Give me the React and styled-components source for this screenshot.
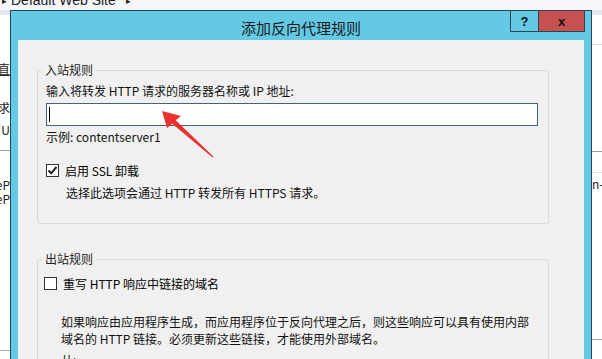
import React from "react";
import styled, { createGlobalStyle } from "styled-components";

const GlobalStyle = createGlobalStyle`
  html, body {
    margin: 0;
    padding: 0;
    width: 602px;
    height: 359px;
    overflow: hidden;
    background: #ffffff;
    font-family: "Noto Sans CJK SC", "Noto Sans", sans-serif;
    color: #000;
  }
`;

const Screen = styled.div`
  position: relative;
  width: 602px;
  height: 359px;
  overflow: hidden;
`;

// window sitting behind the dialog
const BackWindow = styled.div`
  display: flex;
  flex-direction: column;
  height: 100%;
`;

const BackHeader = styled.div`
  height: 10px;
  background: #f4f6f9;
  border-bottom: 5px solid #e1e7ee;
  display: flex;
  align-items: flex-end;
  gap: 4px;
  padding-left: 2px;
  overflow: hidden;
  font-family: "Liberation Sans", sans-serif;
  font-size: 14px;
  line-height: 14px;
  color: #222;
`;

const Caret = styled.span`
  font-size: 9px;
  line-height: 9px;
  margin-bottom: 4px;
  margin-left: ${p => p.gap || 0}px;
`;

const BackText = styled.span`
  margin-bottom: 3px;
`;

const BackBody = styled.div`
  flex: 1;
  display: flex;
  justify-content: space-between;
`;

const BackColumn = styled.div`
  width: 10px;
  overflow: hidden;
  display: flex;
  flex-direction: column;
  padding-top: ${p => p.top}px;
`;

const BackRow = styled.div`
  flex-shrink: 0;
  display: flex;
  align-items: flex-start;
  justify-content: ${p => (p.alignRight ? "flex-end" : "flex-start")};
  white-space: nowrap;
  font-size: 12px;
  line-height: ${p => p.lh || 16}px;
  height: ${p => p.h || 14}px;
  color: #222;
  border-bottom: ${p => (p.line ? `1px solid ${p.line}` : "none")};
  margin-bottom: ${p => p.mb || 0}px;
`;

// dialog
const Dialog = styled.div`
  position: absolute;
  left: 10px;
  top: 10px;
  width: 582px;
  height: 420px;
  box-sizing: border-box;
  border: 1px solid #2a4654;
  background: #63c9e5;
  padding: 0 7px;
  display: flex;
  flex-direction: column;
`;

const TitleBar = styled.div`
  height: 29px;
  box-sizing: border-box;
  padding-top: 3px;
  display: flex;
  align-items: center;
  justify-content: center;
  font-size: 15px;
  color: #1b1b1b;
`;

const Controls = styled.div`
  position: absolute;
  top: -1px;
  right: 6px;
  display: flex;
  height: 22px;
`;

const ControlButton = styled.div`
  width: ${p => p.w}px;
  box-sizing: border-box;
  border: 1px solid #2a4654;
  border-left-width: ${p => (p.first ? 1 : 0)}px;
  background: ${p => p.bg};
  display: flex;
  align-items: center;
  justify-content: center;
  font-family: "Liberation Sans", sans-serif;
  font-weight: bold;
  font-size: 13px;
  color: #111;
`;

const Content = styled.div`
  flex: 1;
  background: #f0f0f0;
  padding-top: 22px;
  display: flex;
  flex-direction: column;
`;

const GroupBox = styled.fieldset`
  margin: ${p => p.mt || 0}px 35px 0 19px;
  padding: 5px 10px ${p => p.pb || 0}px 8px;
  border: 1px solid #d9d9d9;
  border-radius: 3px;
  min-width: 0;
  display: flex;
  flex-direction: column;
`;

const Legend = styled.legend`
  padding: 0 3px;
  margin-left: -4px;
  font-size: 12px;
  line-height: 16px;
  color: #222;
`;

const Text = styled.div`
  font-size: 12px;
  line-height: ${p => p.lh || 16}px;
  margin-top: ${p => p.mt || 0}px;
  padding-left: ${p => p.indent || 0}px;
  white-space: nowrap;
  color: #111;
`;

const TextInput = styled.div`
  margin-top: 4px;
  height: 23px;
  box-sizing: border-box;
  border: 1px solid #3d6480;
  background: #fff;
  display: flex;
  align-items: center;
  padding-left: 2px;
`;

const Cursor = styled.span`
  width: 1px;
  height: 15px;
  background: #000;
`;

const CheckRow = styled.div`
  display: flex;
  align-items: center;
  gap: 6px;
  height: 16px;
  margin-top: ${p => p.mt || 0}px;
  margin-left: ${p => p.ml || 0}px;
  font-size: 12px;
`;

const Box = styled.div`
  width: 13px;
  height: 13px;
  box-sizing: border-box;
  border: 1px solid #333;
  background: #fff;
  display: flex;
  align-items: center;
  justify-content: center;
`;

const Arrow = styled.svg`
  position: absolute;
  left: 158px;
  top: 108px;
  width: 60px;
  height: 55px;
  pointer-events: none;
`;

function CheckBox({ checked }) {
  return (
    <Box>
      {checked && (
        <svg width="11" height="11" viewBox="0 0 11 11">
          <path d="M1.5 5.5 L4.2 8.3 L9.5 2" fill="none" stroke="#222" strokeWidth="2" />
        </svg>
      )}
    </Box>
  );
}

export default function App() {
  return (
    <Screen>
      <GlobalStyle />
      <BackWindow>
        <BackHeader>
          <Caret>▸</Caret>
          <BackText>Default Web Site</BackText>
          <Caret gap={6}>▸</Caret>
        </BackHeader>
        <BackBody>
          <BackColumn top={46}>
            <BackRow alignRight h={17} mb={22}>
              <span style={{ textDecoration: "underline" }}>编辑直</span>
            </BackRow>
            <BackRow alignRight h={16} mb={6}>请求</BackRow>
            <BackRow alignRight h={28} line="#a0a0a0" mb={27}>t U</BackRow>
            <BackRow alignRight h={14} lh={14}>eP</BackRow>
            <BackRow alignRight h={14} lh={14}>eP</BackRow>
            <BackRow h={144} line="#a8a8a8"> </BackRow>
          </BackColumn>
          <BackColumn top={0}>
            <BackRow h={29} line="#dddddd"> </BackRow>
            <BackRow h={106} line="#9a9a9a"> </BackRow>
            <BackRow h={20} line="#e2e2e2" mb={4}> </BackRow>
            <BackRow h={14} lh={14}>n-</BackRow>
            <BackRow h={148} line="#a8a8a8"> </BackRow>
          </BackColumn>
        </BackBody>
      </BackWindow>

      <Dialog>
        <TitleBar>添加反向代理规则</TitleBar>
        <Controls>
          <ControlButton first w={29} bg="#63c9e5">?</ControlButton>
          <ControlButton w={46} bg="#c75050">x</ControlButton>
        </Controls>
        <Content>
          <GroupBox pb={22}>
            <Legend>入站规则</Legend>
            <Text>输入将转发 HTTP 请求的服务器名称或 IP 地址:</Text>
            <TextInput>
              <Cursor />
            </TextInput>
            <Text mt={3}>示例: contentserver1</Text>
            <CheckRow mt={17}>
              <CheckBox checked />
              <span>启用 SSL 卸载</span>
            </CheckRow>
            <Text mt={7} indent={20}>选择此选项会通过 HTTP 转发所有 HTTPS 请求。</Text>
          </GroupBox>
          <GroupBox mt={27} pb={10}>
            <Legend>出站规则</Legend>
            <CheckRow mt={3} ml={-2}>
              <CheckBox />
              <span>重写 HTTP 响应中链接的域名</span>
            </CheckRow>
            <Text mt={22} lh={17} indent={15}>
              如果响应由应用程序生成，而应用程序位于反向代理之后，则这些响应可以具有使用内部
              <br />
              域名的 HTTP 链接。必须更新这些链接，才能使用外部域名。
            </Text>
            <Text mt={5} indent={15}>从:</Text>
          </GroupBox>
        </Content>
      </Dialog>

      <Arrow viewBox="0 0 60 55">
        <polygon
          points="4,3 23,8 17.7,12.2 55.4,48.6 54.6,49.4 14.3,15.8 9,20"
          fill="#ec3030"
        />
      </Arrow>
    </Screen>
  );
}
